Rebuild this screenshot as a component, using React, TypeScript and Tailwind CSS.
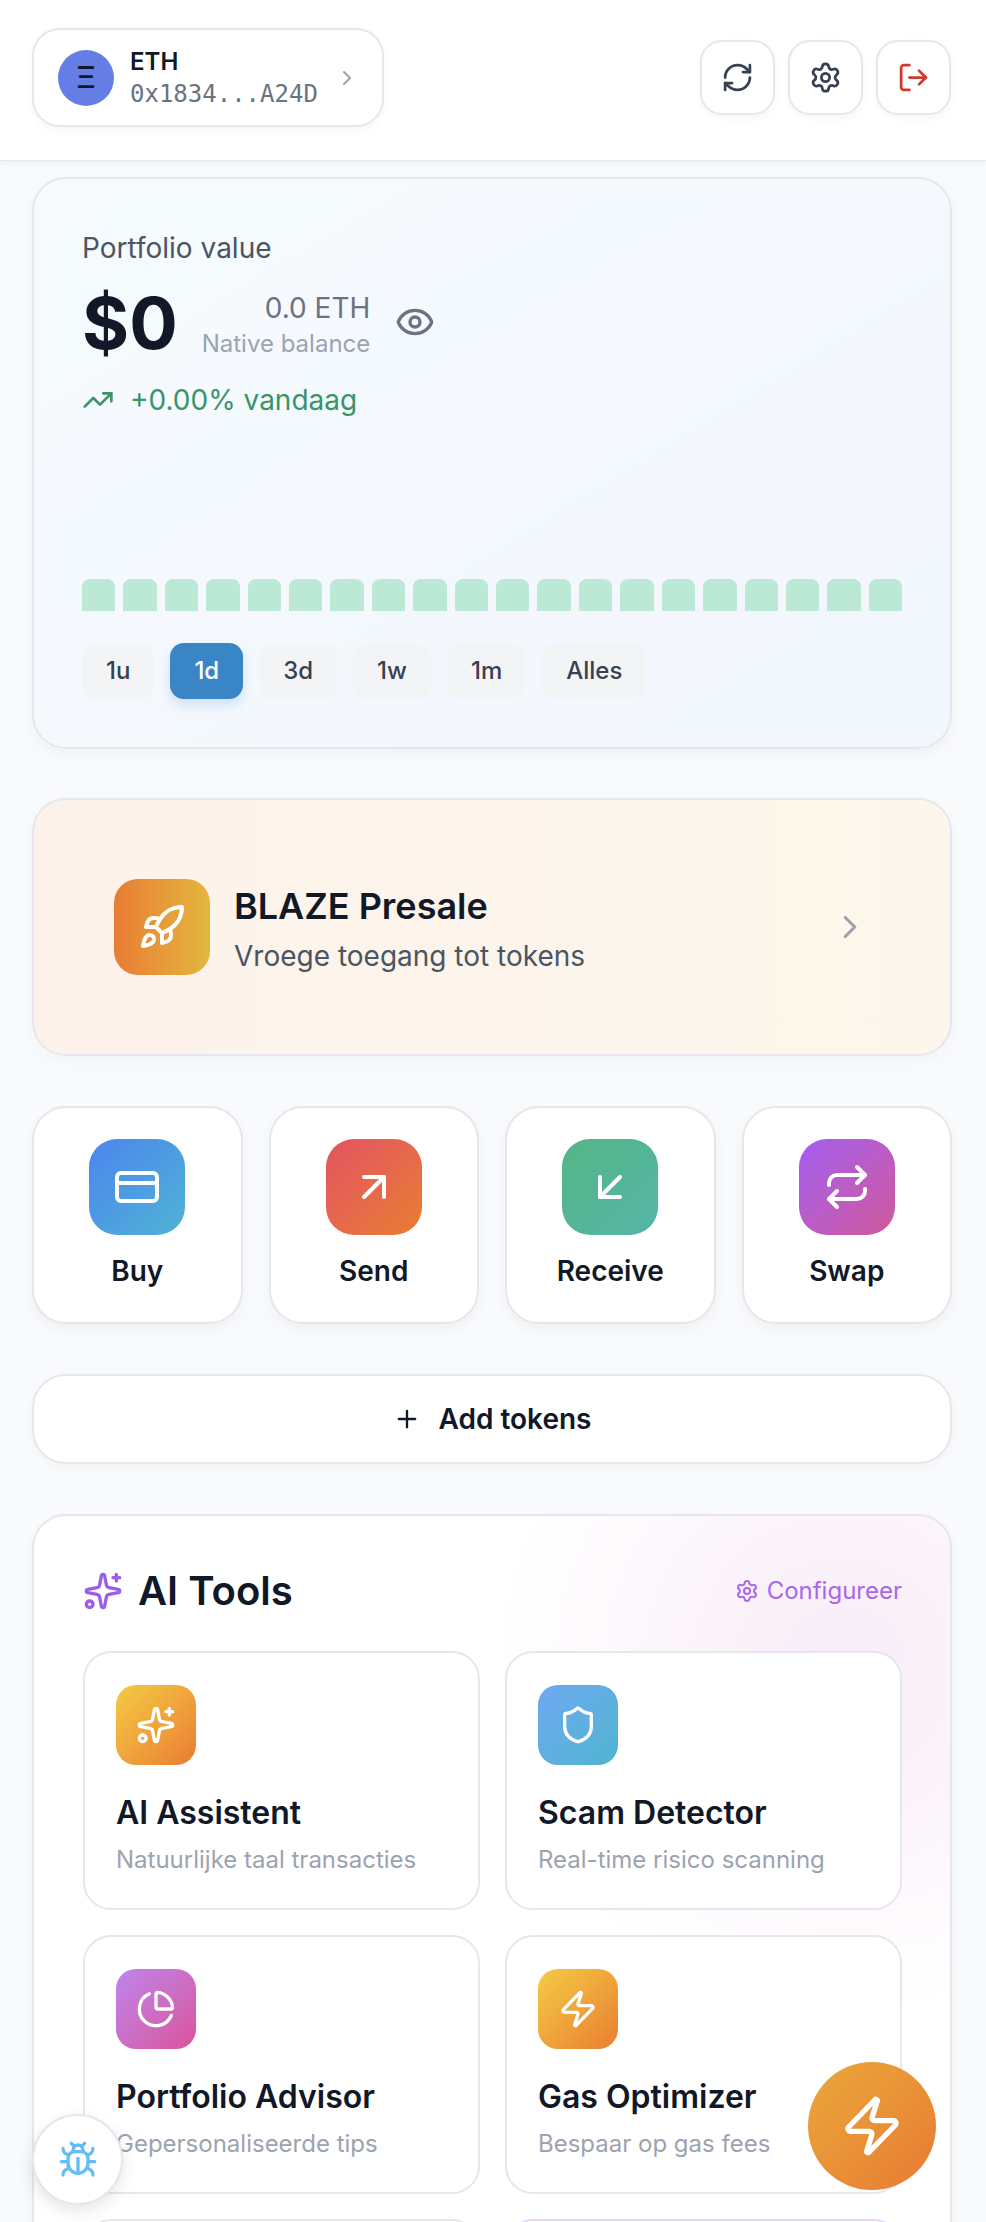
import React from "react";
import {
  ArrowDownLeft,
  ArrowUpRight,
  Bug,
  ChartPie,
  ChevronRight,
  CreditCard,
  Eye,
  LogOut,
  Plus,
  RefreshCw,
  Repeat,
  Rocket,
  Settings,
  Shield,
  Sparkles,
  TrendingUp,
  Zap,
} from "lucide-react";

const ranges = ["1u", "1d", "3d", "1w", "1m", "Alles"];
const bars = Array.from({ length: 20 }, (_, i) => i);

const actions = [
  { label: "Buy", icon: CreditCard, bg: "from-[#4d84ee] to-[#4fb3d3]" },
  { label: "Send", icon: ArrowUpRight, bg: "from-[#e3525f] to-[#e87d2e]" },
  { label: "Receive", icon: ArrowDownLeft, bg: "from-[#55b585] to-[#55b5a8]" },
  { label: "Swap", icon: Repeat, bg: "from-[#a45cf0] to-[#d0569a]" },
];

const tools = [
  {
    title: "AI Assistent",
    sub: "Natuurlijke taal transacties",
    icon: Sparkles,
    bg: "from-[#f3cb45] to-[#e97c32]",
  },
  {
    title: "Scam Detector",
    sub: "Real-time risico scanning",
    icon: Shield,
    bg: "from-[#6ea8f2] to-[#4fb5d0]",
  },
  {
    title: "Portfolio Advisor",
    sub: "Gepersonaliseerde tips",
    icon: ChartPie,
    bg: "from-[#bd84ee] to-[#d9529a]",
  },
  {
    title: "Gas Optimizer",
    sub: "Bespaar op gas fees",
    icon: Zap,
    bg: "from-[#f3cb45] to-[#e97c32]",
  },
];

function HeaderButton({ children }: { children: React.ReactNode }) {
  return (
    <button className="w-[75px] h-[75px] rounded-[22px] bg-white border-2 border-[#e6e7ec] shadow-[0_3px_8px_rgba(0,0,0,0.04)] flex items-center justify-center">
      {children}
    </button>
  );
}

export default function App() {
  return (
    <div className="relative h-[2222px] overflow-hidden bg-[#f9fafb] font-['Inter',sans-serif] text-[#111827]">
      <header className="h-[161px] bg-white border-b border-[#e8e9ec] shadow-[0_2px_4px_rgba(0,0,0,0.05)] pl-[32px] pr-[35px] pb-[5px] flex items-center justify-between">
        <button className="w-[352px] h-[99px] rounded-[28px] bg-white border-2 border-[#e6e7ec] shadow-[0_3px_8px_rgba(0,0,0,0.04)] pl-[24px] pr-[23px] flex items-center">
          <div className="w-[56px] h-[56px] rounded-full bg-[#647ee6] flex items-center justify-center text-[30px] font-medium text-[#111827]">
            Ξ
          </div>
          <div className="ml-[16px] flex-1 text-left">
            <div className="text-[24px] leading-[32px] font-semibold">ETH</div>
            <div className="text-[24px] leading-[32px] text-[#6b7280] font-['DejaVu_Sans_Mono',monospace]">
              0x1834...A24D
            </div>
          </div>
          <ChevronRight className="w-[24px] h-[24px] text-[#9ca3af]" />
        </button>
        <div className="flex gap-[13px]">
          <HeaderButton>
            <RefreshCw className="w-[33px] h-[33px] text-[#374151]" />
          </HeaderButton>
          <HeaderButton>
            <Settings className="w-[33px] h-[33px] text-[#374151]" />
          </HeaderButton>
          <HeaderButton>
            <LogOut className="w-[33px] h-[33px] text-[#cf3a2c]" />
          </HeaderButton>
        </div>
      </header>

      <main className="pl-[32px] pr-[34px] pt-[16px] flex flex-col gap-[50px]">
        <section className="h-[572px] rounded-[34px] border-2 border-[#e6e7ec] bg-linear-to-br from-[#f6fbfe] to-[#f2f6fd] shadow-[0_6px_14px_rgba(0,0,0,0.04)] px-[48px] pt-[49px]">
          <div className="text-[28px] leading-[40px] text-[#4b5563]">Portfolio value</div>
          <div className="mt-[19px] h-[72px] flex items-center">
            <div className="text-[72px] leading-[72px] font-bold">$0</div>
            <div className="ml-[24px] mt-[6px] text-right">
              <div className="text-[28px] leading-[36px] text-[#6b7280]">0.0 ETH</div>
              <div className="text-[24px] leading-[36px] text-[#9ca3af]">Native balance</div>
            </div>
            <Eye className="ml-[25px] -mt-[2px] w-[40px] h-[40px] text-[#6b7280]" />
          </div>
          <div className="mt-[21px] flex items-center h-[40px] text-[#3a9467]">
            <TrendingUp className="w-[32px] h-[32px]" />
            <span className="ml-[16px] text-[28px]">+0.00% vandaag</span>
          </div>
          <div className="mt-[159px] flex gap-[8px]">
            {bars.map((b) => (
              <div key={b} className="flex-1 h-[32px] rounded-t-[8px] bg-[#bbe9d6]" />
            ))}
          </div>
          <div className="mt-[32px] flex gap-[16px]">
            {ranges.map((r) => (
              <button
                key={r}
                className={
                  r === "1d"
                    ? "h-[56px] px-[24px] rounded-[14px] bg-[#3a85c5] text-white text-[24px] font-medium shadow-[0_6px_12px_rgba(58,133,197,0.2)]"
                    : "h-[56px] px-[24px] rounded-[14px] bg-[#f3f4f6] text-[#374151] text-[24px] font-medium"
                }
              >
                {r}
              </button>
            ))}
          </div>
        </section>

        <section className="h-[258px] rounded-[34px] border-2 border-[#e6e7ec] bg-linear-to-r from-[#fdf2ea] to-[#fcf7ec] shadow-[0_6px_14px_rgba(0,0,0,0.03)] pl-[80px] pr-[81px] -mt-[1px] flex items-center">
          <div className="w-[96px] h-[96px] rounded-[24px] bg-linear-to-r from-[#e87c35] to-[#e2b63e] flex items-center justify-center">
            <Rocket className="w-[48px] h-[48px] text-white" />
          </div>
          <div className="ml-[24px] mt-[4px] flex-1">
            <div className="text-[36px] leading-[48px] font-semibold">BLAZE Presale</div>
            <div className="mt-[6px] text-[28px] leading-[40px] text-[#4b5563]">Vroege toegang tot tokens</div>
          </div>
          <ChevronRight className="w-[38px] h-[38px] text-[#9ca3af]" />
        </section>

        <section className="grid grid-cols-4 gap-[26px]">
          {actions.map((a) => (
            <button
              key={a.label}
              className="h-[218px] rounded-[34px] bg-white border-2 border-[#e6e7ec] shadow-[0_6px_14px_rgba(0,0,0,0.04)] pt-[31px] flex flex-col items-center"
            >
              <div className={`w-[96px] h-[96px] rounded-[28px] bg-linear-to-br ${a.bg} flex items-center justify-center`}>
                <a.icon className="w-[48px] h-[48px] text-white" />
              </div>
              <div className="mt-[16px] text-[28px] leading-[40px] font-semibold">{a.label}</div>
            </button>
          ))}
        </section>

        <button className="h-[90px] rounded-[34px] bg-white border-2 border-[#e6e7ec] shadow-[0_4px_8px_rgba(0,0,0,0.03)] flex items-center justify-center text-[28px] font-semibold">
          <Plus className="w-[28px] h-[28px] mr-[18px]" />
          Add tokens
        </button>

        <section className="rounded-[34px] border-2 border-[#e6e7ec] bg-[radial-gradient(circle_at_810px_150px,#f8ecf7_0%,#ffffff_350px)] shadow-[0_6px_14px_rgba(0,0,0,0.04)] pl-[49px] pr-[48px] pt-[45px] pb-[48px]">
          <div className="flex items-center justify-between h-[60px]">
            <div className="flex items-center">
              <Sparkles className="w-[40px] h-[40px] text-[#9b5cf0]" />
              <span className="ml-[15px] text-[40px] font-semibold">AI Tools</span>
            </div>
            <div className="flex items-center text-[24px] text-[#a866ee]">
              <Settings className="w-[24px] h-[24px] mr-[8px]" />
              Configureer
            </div>
          </div>
          <div className="mt-[30px] grid grid-cols-2 gap-[25px]">
            {tools.map((t) => (
              <div key={t.title} className="h-[259px] rounded-[28px] bg-white border-2 border-[#e6e7ec] px-[31px] pt-[32px]">
                <div className={`w-[80px] h-[80px] rounded-[20px] bg-linear-to-br ${t.bg} flex items-center justify-center`}>
                  <t.icon className="w-[40px] h-[40px] text-white" />
                </div>
                <div className="mt-[26px] text-[32px] leading-[44px] font-semibold">{t.title}</div>
                <div className="mt-[7px] text-[24px] leading-[36px] text-[#9ca3af]">{t.sub}</div>
              </div>
            ))}
            <div className="h-[259px] rounded-[28px] bg-white border-2 border-[#e6e7ec]" />
            <div className="h-[259px] rounded-[28px] bg-white border-2 border-[#e9d5f7]" />
          </div>
        </section>
      </main>

      <button className="absolute left-[32px] top-[2114px] w-[91px] h-[91px] rounded-full bg-white border-2 border-[#e6e7ec] shadow-[0_6px_16px_rgba(0,0,0,0.1)] flex items-center justify-center">
        <Bug className="w-[40px] h-[40px] text-[#64bdf9]" />
      </button>
      <button className="absolute left-[808px] top-[2062px] w-[128px] h-[128px] rounded-full bg-linear-to-br from-[#e9a83a] to-[#e87a33] flex items-center justify-center">
        <Zap className="w-[64px] h-[64px] text-white" />
      </button>
    </div>
  );
}
